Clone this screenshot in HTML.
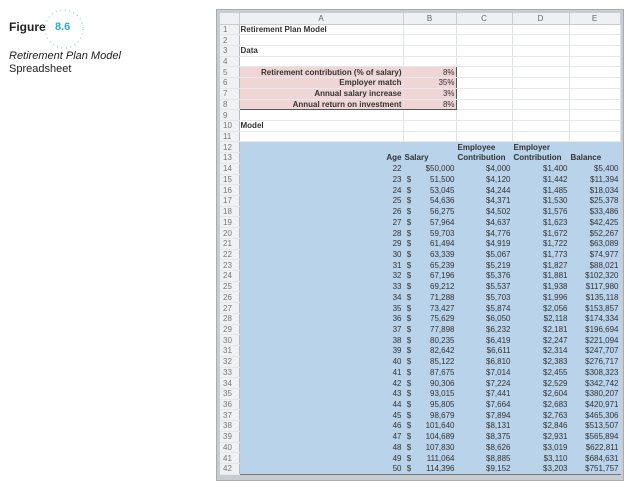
<!DOCTYPE html>
<html><head><meta charset="utf-8"><style>
*{margin:0;padding:0;box-sizing:border-box}
body{width:630px;height:486px;background:#fff;position:relative;overflow:hidden;font-family:"Liberation Sans",Arial,sans-serif}
.fig{position:absolute;left:9px;top:20px;font-size:12px;font-weight:bold;color:#222}
.num{position:absolute;left:55px;top:21px;font-size:11px;font-weight:bold;color:#29a9d9}
.circ{position:absolute;left:42px;top:7px}
.cap{position:absolute;left:9px;top:50px;font-size:11px;color:#222;line-height:13px}
.frame{position:absolute;left:216px;top:9px;width:408px;height:472px;background:#c9ccd0;border:1px solid #a8acb2}
table{position:absolute;left:220px;top:13px;border-collapse:collapse;table-layout:fixed;font-size:8px;color:#333;font-weight:bold;background:#fff}
td{height:10.73px;line-height:9px;padding:0 1px;border-right:1px solid #dfe3e8;border-bottom:1px solid #e4e7eb;white-space:nowrap;overflow:hidden}
tr.h td{height:11px;background:#eef0f3;color:#666;text-align:center;font-weight:normal;border-color:#c9cdd2}
td.n{background:#f0f1f3;color:#777;font-weight:normal;text-align:left;padding-left:3px;border-right:1px solid #b9bec5}
.p{background:#efd6d5}
.b{background:#b9d3ea;border-color:#b9d3ea}
.r{text-align:right}
tr.d td.b{font-weight:normal}
</style></head><body>
<svg class="circ" width="44" height="44"><circle cx="22" cy="22" r="19" fill="none" stroke="#9cc9dc" stroke-width="1.3" stroke-dasharray="1 3.5"/></svg>
<div class="fig">Figure</div>
<div class="num">8.6</div>
<div class="cap"><i>Retirement Plan Model</i><br>Spreadsheet</div>
<div class="frame"></div>
<table>
<colgroup><col style="width:19px"><col style="width:164px"><col style="width:53px"><col style="width:56px"><col style="width:57px"><col style="width:51px"></colgroup>
<tr class="h"><td></td><td>A</td><td>B</td><td>C</td><td>D</td><td>E</td></tr>
<tr><td class="n">1</td><td>Retirement Plan Model</td><td></td><td></td><td></td><td></td></tr>
<tr><td class="n">2</td><td></td><td></td><td></td><td></td><td></td></tr>
<tr><td class="n">3</td><td>Data</td><td></td><td></td><td></td><td></td></tr>
<tr><td class="n">4</td><td></td><td></td><td></td><td></td><td></td></tr>
<tr><td class="n">5</td><td class="p r" style="border-top:1px solid #555;border-left:1px solid #555">Retirement contribution (% of salary)</td><td class="p r" style="border-top:1px solid #555;border-right:1px solid #555;font-weight:normal">8%</td><td></td><td></td><td></td></tr>
<tr><td class="n">6</td><td class="p r" style="border-left:1px solid #555">Employer match</td><td class="p r" style="border-right:1px solid #555;font-weight:normal">35%</td><td></td><td></td><td></td></tr>
<tr><td class="n">7</td><td class="p r" style="border-left:1px solid #555">Annual salary increase</td><td class="p r" style="border-right:1px solid #555;font-weight:normal">3%</td><td></td><td></td><td></td></tr>
<tr><td class="n">8</td><td class="p r" style="border-bottom:1px solid #555;border-left:1px solid #555">Annual return on investment</td><td class="p r" style="border-bottom:1px solid #555;border-right:1px solid #555;font-weight:normal">8%</td><td></td><td></td><td></td></tr>
<tr><td class="n">9</td><td></td><td></td><td></td><td></td><td></td></tr>
<tr><td class="n">10</td><td>Model</td><td></td><td></td><td></td><td></td></tr>
<tr><td class="n">11</td><td></td><td></td><td></td><td></td><td></td></tr>
<tr><td class="n">12</td><td class="b" style="border-top:1px solid #777"></td><td class="b" style="border-top:1px solid #777"></td><td class="b" style="border-top:1px solid #777">Employee</td><td class="b" style="border-top:1px solid #777">Employer</td><td class="b" style="border-top:1px solid #777"></td></tr>
<tr><td class="n">13</td><td class="b r">Age</td><td class="b">Salary</td><td class="b">Contribution</td><td class="b">Contribution</td><td class="b">Balance</td></tr>
<tr class="d"><td class="n">14</td><td class="b r">22</td><td class="b r">$50,000</td><td class="b r">$4,000</td><td class="b r">$1,400</td><td class="b r">$5,400</td></tr>
<tr class="d"><td class="n">15</td><td class="b r">23</td><td class="b r"><span style="float:left">&nbsp;$</span>51,500</td><td class="b r">$4,120</td><td class="b r">$1,442</td><td class="b r">$11,394</td></tr>
<tr class="d"><td class="n">16</td><td class="b r">24</td><td class="b r"><span style="float:left">&nbsp;$</span>53,045</td><td class="b r">$4,244</td><td class="b r">$1,485</td><td class="b r">$18,034</td></tr>
<tr class="d"><td class="n">17</td><td class="b r">25</td><td class="b r"><span style="float:left">&nbsp;$</span>54,636</td><td class="b r">$4,371</td><td class="b r">$1,530</td><td class="b r">$25,378</td></tr>
<tr class="d"><td class="n">18</td><td class="b r">26</td><td class="b r"><span style="float:left">&nbsp;$</span>56,275</td><td class="b r">$4,502</td><td class="b r">$1,576</td><td class="b r">$33,486</td></tr>
<tr class="d"><td class="n">19</td><td class="b r">27</td><td class="b r"><span style="float:left">&nbsp;$</span>57,964</td><td class="b r">$4,637</td><td class="b r">$1,623</td><td class="b r">$42,425</td></tr>
<tr class="d"><td class="n">20</td><td class="b r">28</td><td class="b r"><span style="float:left">&nbsp;$</span>59,703</td><td class="b r">$4,776</td><td class="b r">$1,672</td><td class="b r">$52,267</td></tr>
<tr class="d"><td class="n">21</td><td class="b r">29</td><td class="b r"><span style="float:left">&nbsp;$</span>61,494</td><td class="b r">$4,919</td><td class="b r">$1,722</td><td class="b r">$63,089</td></tr>
<tr class="d"><td class="n">22</td><td class="b r">30</td><td class="b r"><span style="float:left">&nbsp;$</span>63,339</td><td class="b r">$5,067</td><td class="b r">$1,773</td><td class="b r">$74,977</td></tr>
<tr class="d"><td class="n">23</td><td class="b r">31</td><td class="b r"><span style="float:left">&nbsp;$</span>65,239</td><td class="b r">$5,219</td><td class="b r">$1,827</td><td class="b r">$88,021</td></tr>
<tr class="d"><td class="n">24</td><td class="b r">32</td><td class="b r"><span style="float:left">&nbsp;$</span>67,196</td><td class="b r">$5,376</td><td class="b r">$1,881</td><td class="b r">$102,320</td></tr>
<tr class="d"><td class="n">25</td><td class="b r">33</td><td class="b r"><span style="float:left">&nbsp;$</span>69,212</td><td class="b r">$5,537</td><td class="b r">$1,938</td><td class="b r">$117,980</td></tr>
<tr class="d"><td class="n">26</td><td class="b r">34</td><td class="b r"><span style="float:left">&nbsp;$</span>71,288</td><td class="b r">$5,703</td><td class="b r">$1,996</td><td class="b r">$135,118</td></tr>
<tr class="d"><td class="n">27</td><td class="b r">35</td><td class="b r"><span style="float:left">&nbsp;$</span>73,427</td><td class="b r">$5,874</td><td class="b r">$2,056</td><td class="b r">$153,857</td></tr>
<tr class="d"><td class="n">28</td><td class="b r">36</td><td class="b r"><span style="float:left">&nbsp;$</span>75,629</td><td class="b r">$6,050</td><td class="b r">$2,118</td><td class="b r">$174,334</td></tr>
<tr class="d"><td class="n">29</td><td class="b r">37</td><td class="b r"><span style="float:left">&nbsp;$</span>77,898</td><td class="b r">$6,232</td><td class="b r">$2,181</td><td class="b r">$196,694</td></tr>
<tr class="d"><td class="n">30</td><td class="b r">38</td><td class="b r"><span style="float:left">&nbsp;$</span>80,235</td><td class="b r">$6,419</td><td class="b r">$2,247</td><td class="b r">$221,094</td></tr>
<tr class="d"><td class="n">31</td><td class="b r">39</td><td class="b r"><span style="float:left">&nbsp;$</span>82,642</td><td class="b r">$6,611</td><td class="b r">$2,314</td><td class="b r">$247,707</td></tr>
<tr class="d"><td class="n">32</td><td class="b r">40</td><td class="b r"><span style="float:left">&nbsp;$</span>85,122</td><td class="b r">$6,810</td><td class="b r">$2,383</td><td class="b r">$276,717</td></tr>
<tr class="d"><td class="n">33</td><td class="b r">41</td><td class="b r"><span style="float:left">&nbsp;$</span>87,675</td><td class="b r">$7,014</td><td class="b r">$2,455</td><td class="b r">$308,323</td></tr>
<tr class="d"><td class="n">34</td><td class="b r">42</td><td class="b r"><span style="float:left">&nbsp;$</span>90,306</td><td class="b r">$7,224</td><td class="b r">$2,529</td><td class="b r">$342,742</td></tr>
<tr class="d"><td class="n">35</td><td class="b r">43</td><td class="b r"><span style="float:left">&nbsp;$</span>93,015</td><td class="b r">$7,441</td><td class="b r">$2,604</td><td class="b r">$380,207</td></tr>
<tr class="d"><td class="n">36</td><td class="b r">44</td><td class="b r"><span style="float:left">&nbsp;$</span>95,805</td><td class="b r">$7,664</td><td class="b r">$2,683</td><td class="b r">$420,971</td></tr>
<tr class="d"><td class="n">37</td><td class="b r">45</td><td class="b r"><span style="float:left">&nbsp;$</span>98,679</td><td class="b r">$7,894</td><td class="b r">$2,763</td><td class="b r">$465,306</td></tr>
<tr class="d"><td class="n">38</td><td class="b r">46</td><td class="b r"><span style="float:left">&nbsp;$</span>101,640</td><td class="b r">$8,131</td><td class="b r">$2,846</td><td class="b r">$513,507</td></tr>
<tr class="d"><td class="n">39</td><td class="b r">47</td><td class="b r"><span style="float:left">&nbsp;$</span>104,689</td><td class="b r">$8,375</td><td class="b r">$2,931</td><td class="b r">$565,894</td></tr>
<tr class="d"><td class="n">40</td><td class="b r">48</td><td class="b r"><span style="float:left">&nbsp;$</span>107,830</td><td class="b r">$8,626</td><td class="b r">$3,019</td><td class="b r">$622,811</td></tr>
<tr class="d"><td class="n">41</td><td class="b r">49</td><td class="b r"><span style="float:left">&nbsp;$</span>111,064</td><td class="b r">$8,885</td><td class="b r">$3,110</td><td class="b r">$684,631</td></tr>
<tr class="d"><td class="n">42</td><td class="b r" style="border-bottom:1px solid #777">50</td><td class="b r" style="border-bottom:1px solid #777"><span style="float:left">&nbsp;$</span>114,396</td><td class="b r" style="border-bottom:1px solid #777">$9,152</td><td class="b r" style="border-bottom:1px solid #777">$3,203</td><td class="b r" style="border-bottom:1px solid #777">$751,757</td></tr>
</table>
</body></html>
